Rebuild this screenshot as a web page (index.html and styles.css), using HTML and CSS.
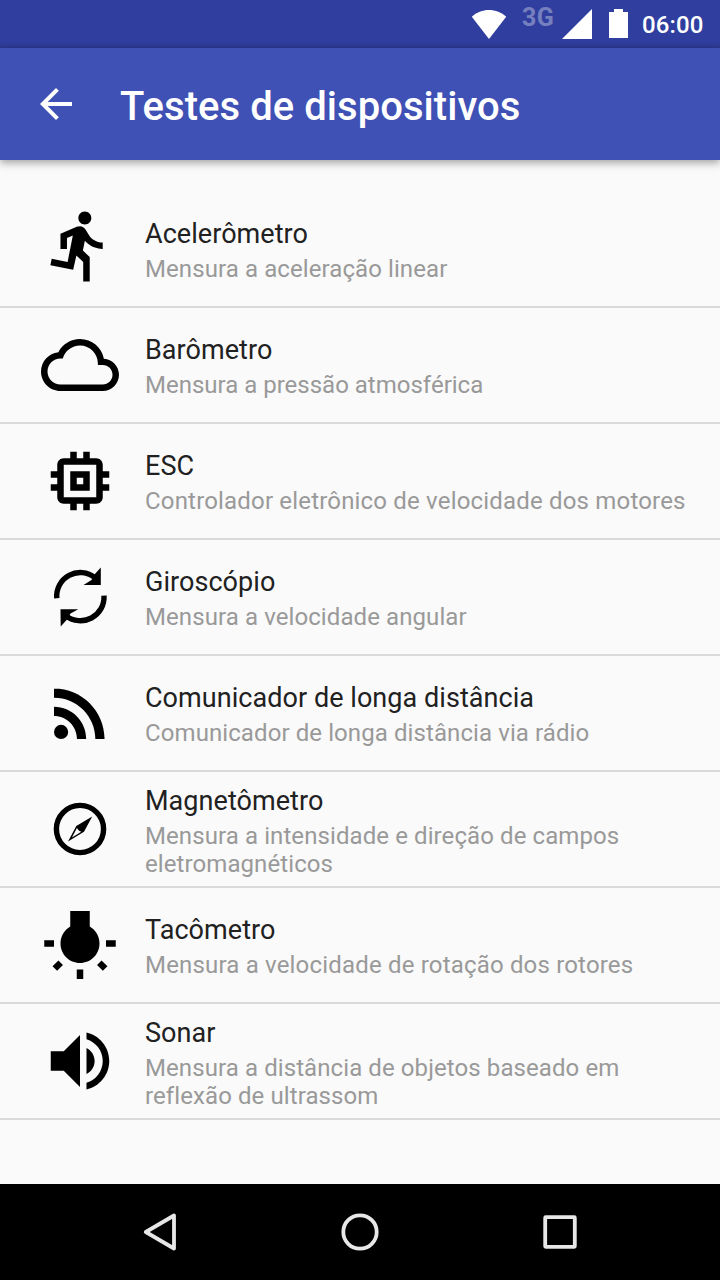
FILE: index.html
```html
<!DOCTYPE html>
<html lang="pt-BR">
<head>
<meta charset="utf-8">
<title>Testes de dispositivos</title>
<link rel="stylesheet" href="styles.css">
</head>
<body>
<div class="screen">
  <div class="status-bar">
    <svg class="wifi" width="36" height="29" viewBox="0 0 36 29"><path d="M.8 6.8C10-2.2 26-2.2 35.200 6.800L18 29z"/></svg>
    <span class="network">3G</span>
    <svg class="signal" width="30" height="30" viewBox="0 0 30 30"><path d="M30 0v30H0z"/></svg>
    <svg class="battery" width="19" height="29" viewBox="0 0 19 29"><path d="M5 0h9v3h5v26H0V3h5z"/></svg>
    <span class="clock">06:00</span>
  </div>
  <header class="app-bar">
    <svg class="back" width="32" height="32" viewBox="4 4 16 16"><path d="M20 11H7.830l5.590-5.590L12 4l-8 8 8 8 1.410-1.410L7.830 13H20z"/></svg>
    <h1 class="heading">Testes de dispositivos</h1>
  </header>
  <ul class="list">
    <li class="row">
      <svg class="icon" viewBox="0 1 24 24"><path d="M13.490 5.480c1.100 0 2-.9 2-2s-.9-2-2-2-2 .9-2 2 .9 2 2 2zm-3.600 13.900l1-4.400 2.100 2v6h2v-7.500l-2.100-2 .6-3c1.300 1.500 3.300 2.500 5.500 2.500v-2c-1.900 0-3.500-1-4.300-2.400l-1-1.600c-.4-.6-1-1-1.700-1-.3 0-.5.1-.8.1l-5.200 2.200v4.700h2v-3.400l1.800-.7-1.600 8.100-4.900-1-.4 2 7 1.400z"/></svg>
      <div class="text"><div class="name">Acelerômetro</div><div class="desc">Mensura a aceleração linear</div></div>
    </li>
    <li class="row">
      <svg class="icon" viewBox="0 0 24 24"><path d="M19.350 10.040C18.670 6.590 15.640 4 12 4 9.110 4 6.600 5.640 5.350 8.040 2.340 8.360 0 10.910 0 14c0 3.310 2.690 6 6 6h13c2.760 0 5-2.240 5-5 0-2.640-2.050-4.780-4.650-4.960zM19 18H6c-2.210 0-4-1.790-4-4s1.790-4 4-4h.71C7.370 7.690 9.480 6 12 6c3.040 0 5.500 2.460 5.500 5.500v.5H19c1.660 0 3 1.340 3 3s-1.340 3-3 3z"/></svg>
      <div class="text"><div class="name">Barômetro</div><div class="desc desc-tight">Mensura a pressão atmosférica</div></div>
    </li>
    <li class="row">
      <svg class="icon" viewBox="0 0 24 24"><path d="M15 9H9v6h6V9zm-2 4h-2v-2h2v2zm8-2V9h-2V7c0-1.100-.9-2-2-2h-2V3h-2v2h-2V3H9v2H7c-1.100 0-2 .9-2 2v2H3v2h2v2H3v2h2v2c0 1.100.9 2 2 2h2v2h2v-2h2v2h2v-2h2c1.100 0 2-.9 2-2v-2h2v-2h-2v-2h2zm-4 6H7V7h10v10z"/></svg>
      <div class="text"><div class="name">ESC</div><div class="desc desc-wide">Controlador eletrônico de velocidade dos motores</div></div>
    </li>
    <li class="row">
      <svg class="icon" viewBox="0 0 78 78"><path class="stroke" d="M15.800 40.300A23.600 23.600 0 0 1 54 19.700M63 37.700A23.600 23.600 0 0 1 25 57.800"/><path d="M59.800 9.500V27H42.500L50.500 22L53 17zM19.500 51.200H37.300L29.500 55.500L26.500 61L19.700 68.500z"/></svg>
      <div class="text"><div class="name">Giroscópio</div><div class="desc">Mensura a velocidade angular</div></div>
    </li>
    <li class="row">
      <svg class="icon" viewBox="0 0 24 24"><circle cx="6.180" cy="17.820" r="2.180"/><path d="M4 4.440v2.830c7.030 0 12.730 5.700 12.730 12.730h2.830c0-8.590-6.970-15.560-15.560-15.560zm0 5.660v2.830c3.900 0 7.070 3.170 7.070 7.070h2.830c0-5.470-4.430-9.900-9.900-9.900z"/></svg>
      <div class="text"><div class="name">Comunicador de longa distância</div><div class="desc">Comunicador de longa distância via rádio</div></div>
    </li>
    <li class="row row-double">
      <svg class="icon" viewBox="0 0 78 78"><circle class="stroke" cx="39" cy="39" r="23.600"/><path fill-rule="evenodd" d="M51.200 26.500L43 41.800L27 51.500L35.300 35.900zM35.900 38L31 47.500L40.300 41.800L38 40.800z"/></svg>
      <div class="text"><div class="name">Magnetômetro</div><div class="desc">Mensura a intensidade e direção de campos eletromagnéticos</div></div>
    </li>
    <li class="row">
      <svg class="icon" viewBox="0 0 24 24"><path d="M3.550 18.540l1.410 1.410 1.800-1.790-1.410-1.410-1.800 1.790zM11 22.450h2V19.500h-2v2.950zM4 10.500H1v2h3v-2zm11-4.190V1.500H9v4.810C7.210 7.350 6 9.280 6 11.500c0 3.310 2.690 6 6 6s6-2.690 6-6c0-2.220-1.210-4.150-3-5.190zm5 4.190v2h3v-2h-3zm-2.760 7.660l1.790 1.800 1.410-1.410-1.800-1.790-1.400 1.400z"/></svg>
      <div class="text"><div class="name">Tacômetro</div><div class="desc desc-wide">Mensura a velocidade de rotação dos rotores</div></div>
    </li>
    <li class="row row-double">
      <svg class="icon" viewBox="0 0 24 24"><path d="M3 9v6h4l5 5V4L7 9H3zm13.500 3c0-1.770-1.020-3.290-2.500-4.030v8.050c1.480-.73 2.500-2.250 2.500-4.020zM14 3.230v2.060c2.890.86 5 3.540 5 6.710s-2.110 5.850-5 6.710v2.060c4.010-.91 7-4.490 7-8.770s-2.990-7.860-7-8.770z"/></svg>
      <div class="text"><div class="name">Sonar</div><div class="desc">Mensura a distância de objetos baseado em reflexão de ultrassom</div></div>
    </li>
  </ul>
  <nav class="nav-bar">
    <svg class="nav-icon" viewBox="0 0 48 48"><path d="M38 7.500V40.500L9.800 24z"/></svg>
    <svg class="nav-icon" viewBox="0 0 48 48"><circle cx="24" cy="24" r="16.700"/></svg>
    <svg class="nav-icon" viewBox="0 0 48 48"><rect x="9.200" y="9.200" width="29.600" height="29.600" rx=".5"/></svg>
  </nav>
</div>
</body>
</html>
```

FILE: styles.css
```css
* { box-sizing: border-box; }

body {
  margin: 0;
  font-family: Roboto, "Noto Sans", sans-serif;
}

.screen {
  display: flex;
  flex-direction: column;
  width: 720px;
  height: 1280px;
  background: #fafafa;
}

.status-bar {
  display: flex;
  justify-content: flex-end;
  align-items: flex-start;
  height: 48px;
  padding: 9px 16px 0 0;
  background: linear-gradient(#303f9f 42px, #2b388f 48px);
  color: #fff;
  fill: #fff;
}

.wifi { margin: 1px 15px 0 0; }

.network {
  width: 33px;
  margin-right: 7px;
  color: #7680be;
  font-size: 25px;
  font-weight: 700;
  letter-spacing: .5px;
  line-height: 18px;
}

.battery { margin-left: 17px; }

.clock {
  width: 62px;
  margin-left: 14px;
  font-size: 24px;
  font-weight: 500;
  letter-spacing: .1px;
  line-height: 33px;
  white-space: nowrap;
}

.app-bar {
  display: flex;
  align-items: center;
  height: 112px;
  padding-left: 40px;
  background: #3f51b5;
  box-shadow: 0 3px 8px rgba(0, 0, 0, .35);
  color: #fff;
  fill: #fff;
}

.heading {
  margin: 6px 0 0 48px;
  font-size: 40px;
  font-weight: 500;
  letter-spacing: .05px;
  line-height: 48px;
}

.list {
  flex: 1;
  margin: 0;
  padding: 32px 0 0;
  list-style: none;
}

.row {
  display: flex;
  align-items: center;
  height: 116px;
  padding: 0 32px 0 41px;
  border-bottom: 2px solid #dadada;
}

.row-double .text { padding-top: 2px; }

.icon {
  flex: none;
  width: 78px;
  height: 78px;
  margin-right: 26px;
}

.stroke {
  fill: none;
  stroke: #000;
  stroke-width: 5.400;
}

.text { flex: 1; }

.name {
  margin-bottom: 2px;
  color: #212121;
  font-size: 27px;
  letter-spacing: .05px;
  line-height: 38px;
}

.desc {
  color: #999;
  font-size: 24px;
  letter-spacing: .09px;
  line-height: 28px;
}

.desc-tight { letter-spacing: 0; }

.desc-wide { letter-spacing: .18px; }

.nav-bar {
  display: flex;
  justify-content: center;
  align-items: center;
  gap: 152px;
  height: 96px;
  background: #000;
}

.nav-icon {
  width: 48px;
  height: 48px;
  fill: none;
  stroke: #e8e8e8;
  stroke-width: 3.800;
  stroke-linejoin: round;
}
```
